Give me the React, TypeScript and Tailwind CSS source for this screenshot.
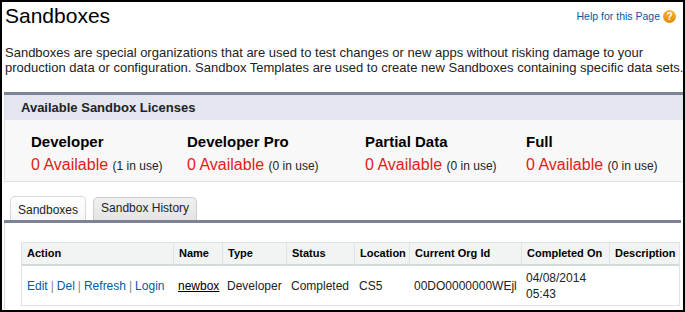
import React from "react";

const licenses = [
  { name: "Developer", inUse: 1, w: "w-[156px]" },
  { name: "Developer Pro", inUse: 0, w: "w-[178px]" },
  { name: "Partial Data", inUse: 0, w: "w-[161px]" },
  { name: "Full", inUse: 0, w: "w-[120px]" },
];

const headers = [
  "Action",
  "Name",
  "Type",
  "Status",
  "Location",
  "Current Org Id",
  "Completed On",
  "Description",
];

export default function App() {
  return (
    <div className="w-[685px] h-[312px] border-2 border-black bg-white overflow-hidden font-['Liberation_Sans',Arial,sans-serif] text-[#222]">
      <div className="flex justify-between items-start pl-[3px] pr-[7px] pt-[2px]">
        <h1 className="text-[21px] leading-[24px] text-black">Sandboxes</h1>
        <div className="flex items-center gap-[3px] mt-[5px]">
          <a className="text-[10.5px] leading-[14px] text-[#015ba7]">Help for this Page</a>
          <span className="w-[13px] h-[13px] rounded-full bg-gradient-to-b from-[#f7b733] to-[#e08a00] text-white text-[10px] leading-[13px] font-bold flex items-center justify-center">
            ?
          </span>
        </div>
      </div>

      <p className="mt-[17px] pl-[3px] text-[13px] leading-[15px] text-[#222] whitespace-nowrap">
        Sandboxes are special organizations that are used to test changes or new apps without risking damage to your
        <br />
        production data or configuration. Sandbox Templates are used to create new Sandboxes containing specific data sets.
      </p>

      <div className="mt-[17px] ml-[2px] border-t-[3px] border-[#7c8396]">
        <div className="h-[25px] bg-[#e3e6ef] border-l border-[#d8dde6] pl-[16px] flex items-center">
          <span className="text-[13px] font-bold text-[#222]">Available Sandbox Licenses</span>
        </div>
        <div className="h-[62px] bg-[#f8f8f8] border-l border-b border-[#e0e3e5] pl-[26px] pt-[13px] flex">
          {licenses.map((l) => (
            <div key={l.name} className={`${l.w} shrink-0`}>
              <div className="text-[15px] leading-[18px] font-bold text-black">{l.name}</div>
              <div className="mt-[4px] leading-[20px] whitespace-nowrap">
                <span className="text-[16px] text-[#e31b1b]">0 Available</span>{" "}
                <span className="text-[12px] text-[#222]">({l.inUse} in use)</span>
              </div>
            </div>
          ))}
        </div>
      </div>

      <div className="mt-[14px] ml-[2px] mr-[2px]">
        <div className="flex items-end gap-[7px] pl-[6px]">
          <div className="h-[24px] px-[7px] pt-[6px] border border-b-0 border-[#d4dadc] rounded-t-[5px] bg-gradient-to-b from-white to-[#f6f6f6] text-[12px] leading-[14px] text-[#222]">
            Sandboxes
          </div>
          <div className="h-[23px] px-[7px] pt-[3px] border border-b-0 border-[#c9cdd1] rounded-t-[5px] bg-gradient-to-b from-[#f0f0f0] to-[#e4e4e4] text-[12px] leading-[14px] text-[#222]">
            Sandbox History
          </div>
        </div>
        <div className="h-[3px] bg-[#7c8396]" />
        <div className="border-l border-[#d8dde6] pl-[16px] pt-[19px] h-[120px]">
          <div className="w-[659px] border border-[#e0e3e5] grid grid-cols-[151px_49px_64px_68px_55px_112px_88px_70px]">
            {headers.map((h, i) => (
              <div
                key={h}
                className={`h-[23px] bg-[#f2f3f3] border-b-2 border-[#d4dadc] pl-[5px] flex items-center text-[11px] font-bold text-black whitespace-nowrap ${
                  i > 0 ? "border-l border-l-[#e0e3e5]" : ""
                }`}
              >
                {h}
              </div>
            ))}
            <div className="h-[39px] pl-[5px] flex items-center text-[12px] leading-[16px] whitespace-nowrap">
              <a className="text-[#015ba7]">Edit</a>
              <span className="text-[#888] mx-[3px]">|</span>
              <a className="text-[#015ba7]">Del</a>
              <span className="text-[#888] mx-[3px]">|</span>
              <a className="text-[#015ba7]">Refresh</a>
              <span className="text-[#888] mx-[3px]">|</span>
              <a className="text-[#015ba7]">Login</a>
            </div>
            <div className="h-[39px] pl-[5px] flex items-center text-[12px] leading-[16px]">
              <a className="text-black underline">newbox</a>
            </div>
            <div className="h-[39px] pl-[5px] flex items-center text-[12px] leading-[16px] text-[#222]">Developer</div>
            <div className="h-[39px] pl-[5px] flex items-center text-[12px] leading-[16px] text-[#222]">Completed</div>
            <div className="h-[39px] pl-[5px] flex items-center text-[12px] leading-[16px] text-[#222]">CS5</div>
            <div className="h-[39px] pl-[5px] flex items-center text-[12px] leading-[16px] text-[#222]">00DO0000000WEjl</div>
            <div className="h-[39px] pl-[5px] flex items-center text-[12px] leading-[16px] text-[#222]">
              04/08/2014
              <br />
              05:43
            </div>
            <div className="h-[39px]" />
          </div>
        </div>
      </div>
    </div>
  );
}
